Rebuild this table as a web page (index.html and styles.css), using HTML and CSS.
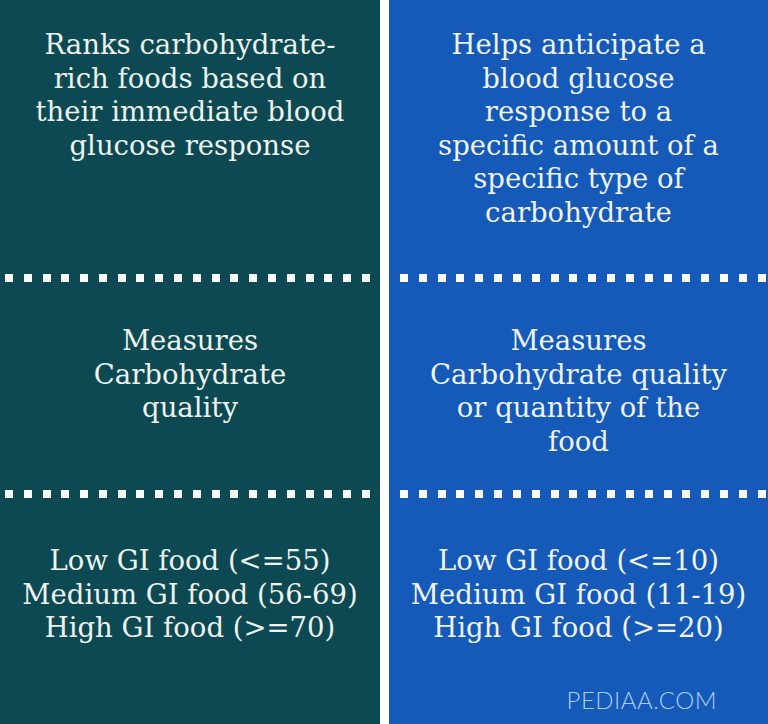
FILE: index.html
```html
<!DOCTYPE html>
<html lang="en">
<head>
<meta charset="utf-8">
<title>GI vs GL</title>
<link rel="stylesheet" href="styles.css">
</head>
<body>
<div class="board">
  <div class="cell teal top"><p>Ranks carbohydrate-<br>rich foods based on<br>their immediate blood<br>glucose response</p></div>
  <div class="cell blue top"><p>Helps anticipate a<br>blood glucose<br>response to a<br>specific amount of a<br>specific type of<br>carbohydrate</p></div>

  <div class="dots teal left-dots"><i></i><i></i><i></i><i></i><i></i><i></i><i></i><i></i><i></i><i></i><i></i><i></i><i></i><i></i><i></i><i></i><i></i><i></i><i></i><i></i></div>
  <div class="dots blue right-dots"><i></i><i></i><i></i><i></i><i></i><i></i><i></i><i></i><i></i><i></i><i></i><i></i><i></i><i></i><i></i><i></i><i></i><i></i><i></i><i></i></div>

  <div class="cell teal mid"><p>Measures<br>Carbohydrate<br>quality</p></div>
  <div class="cell blue mid"><p>Measures<br>Carbohydrate quality<br>or quantity of the<br>food</p></div>

  <div class="dots teal left-dots"><i></i><i></i><i></i><i></i><i></i><i></i><i></i><i></i><i></i><i></i><i></i><i></i><i></i><i></i><i></i><i></i><i></i><i></i><i></i><i></i></div>
  <div class="dots blue right-dots"><i></i><i></i><i></i><i></i><i></i><i></i><i></i><i></i><i></i><i></i><i></i><i></i><i></i><i></i><i></i><i></i><i></i><i></i><i></i><i></i></div>

  <div class="cell teal bottom"><p>Low GI food (&lt;=55)<br>Medium GI food (56-69)<br>High GI food (&gt;=70)</p></div>
  <div class="cell blue bottom"><p>Low GI food (&lt;=10)<br>Medium GI food (11-19)<br>High GI food (&gt;=20)</p><div class="logo">PEDIAA.COM</div></div>
</div>
</body>
</html>
```
FILE: styles.css
```css
html, body {
  margin: 0;
  padding: 0;
  background: #ffffff;
}
.board {
  width: 768px;
  height: 724px;
  display: grid;
  grid-template-columns: 380px 379px;
  column-gap: 9px;
  grid-template-rows: 274px 8px 208px 8px 226px;
  overflow: hidden;
}
.teal { background: #0c4953; }
.blue { background: #1559b9; }
.cell {
  display: flex;
  flex-direction: column;
  align-items: center;
  color: #eef3ee;
  font-family: "DejaVu Serif", "Liberation Serif", serif;
  font-size: 27.5px;
  line-height: 33.6px;
  text-align: center;
  white-space: nowrap;
}
.cell p { margin: 0; }
.top { padding-top: 28px; }
.mid { padding-top: 42px; }
.bottom { padding-top: 46px; }
.dots {
  display: flex;
  justify-content: space-between;
  align-items: center;
}
.dots i {
  display: block;
  width: 8px;
  height: 8px;
  background: #fbfdfb;
}
.left-dots { padding: 0 10px 0 5px; }
.right-dots { padding: 0 2px 0 11px; }
.logo {
  margin-top: auto;
  margin-bottom: 12px;
  align-self: flex-end;
  margin-right: 51px;
  font-family: "Lato", "Open Sans", sans-serif;
  font-weight: 300;
  font-size: 24px;
  line-height: 24px;
  letter-spacing: 0.5px;
  color: #a8d0f2;
}
```
